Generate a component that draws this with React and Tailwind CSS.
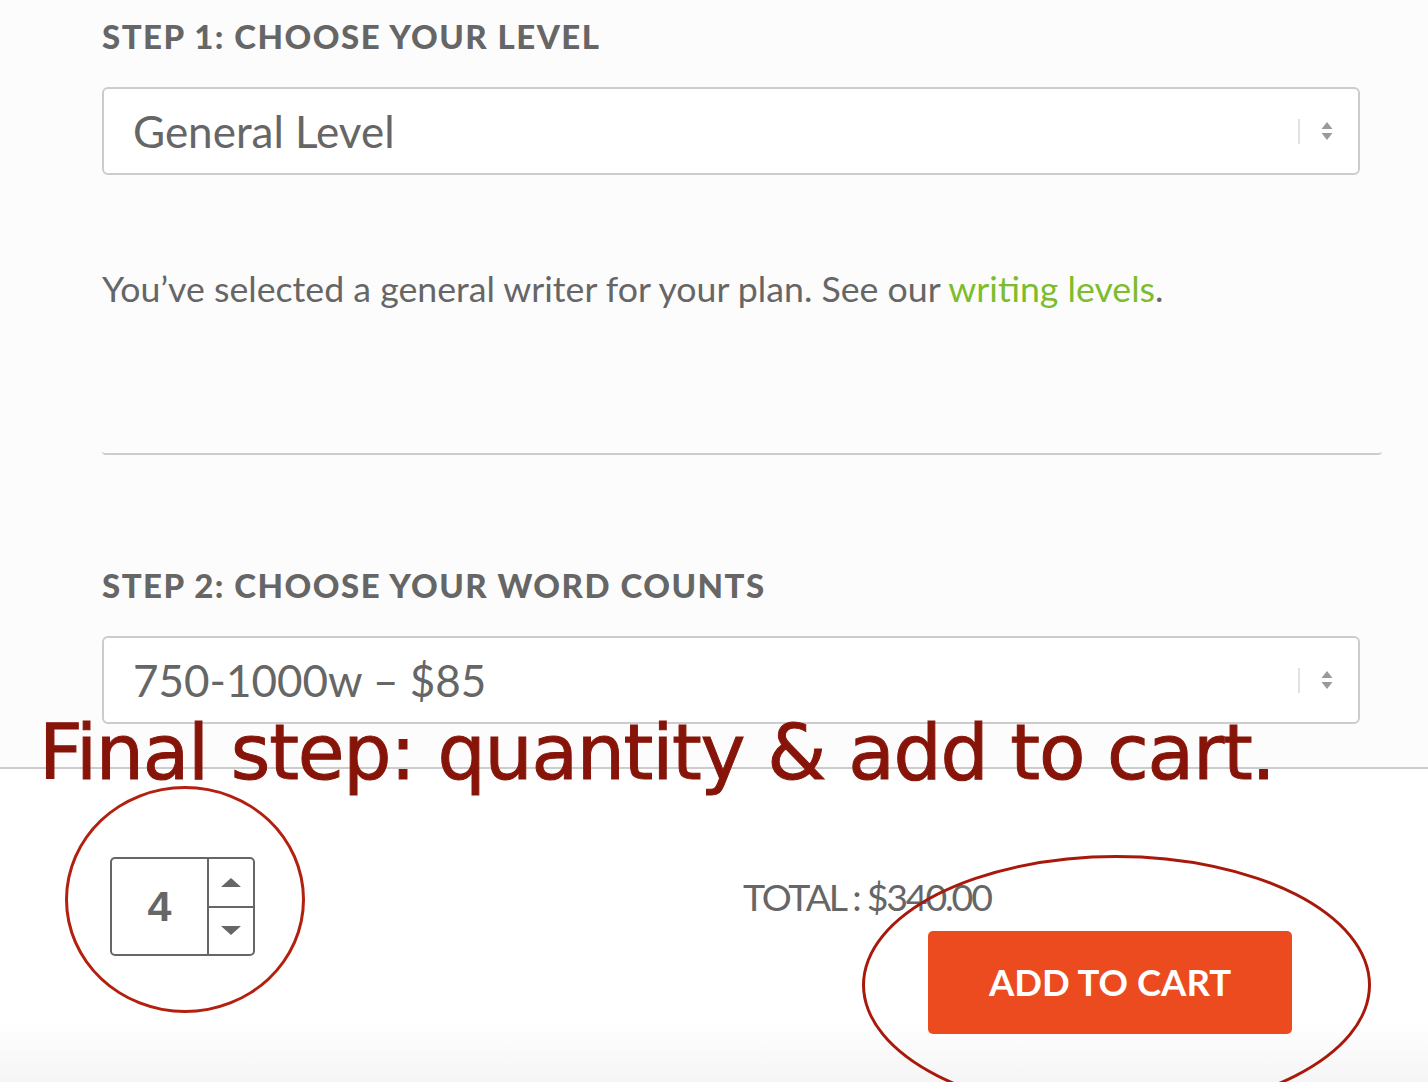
import React from 'react';

const Arrows = () => (
  <svg width="12" height="18" viewBox="0 0 12 18" className="ml-[21px]">
    <path d="M6 0 L11.5 7 H0.5 Z" fill="#9a9a9a" />
    <path d="M6 18 L11.5 11 H0.5 Z" fill="#9a9a9a" />
  </svg>
);

const Select = ({ value }) => {
  return (
    <div className="flex h-[88px] w-[1258px] items-center rounded-[6px] border-2 border-[#cccccc] bg-white pl-[29px] pr-[25px]">
      <span className="flex-1 text-[44px] leading-none text-[#666666]">{value}</span>
      <span className="h-[25px] w-[2px] bg-[#e2e2e2]" />
      <Arrows />
    </div>
  );
};

const App = () => {
  return (
    <div className="relative flex h-screen flex-col overflow-hidden bg-[#fcfcfc] font-['Lato',sans-serif]">
      {/* plan options */}
      <div className="pl-[102px] pt-[16px]">
        <h3 className="text-[33px] font-black uppercase leading-[40px] tracking-[1.5px] text-[#666666]">
          Step 1: Choose your level
        </h3>
        <div className="mt-[31px]">
          <Select value="General Level" />
        </div>
        <div className="mt-[93px] w-[1280px] rounded-b-[4px] border-b-2 border-[#cccccc] pb-[143px]">
          <p className="text-[35.7px] leading-[42px] text-[#666666]">
            You’ve selected a general writer for your plan. See our{' '}
            <a className="text-[#7cbd2e]">writing levels</a>.
          </p>
        </div>
        <h3 className="mt-[110px] text-[33px] font-black uppercase leading-[40px] tracking-[1.5px] text-[#666666]">
          Step 2: Choose your word counts
        </h3>
        <div className="mt-[31px]">
          <Select value="750-1000w – $85" />
        </div>
      </div>

      {/* quantity + cart bar */}
      <div className="mt-[43px] flex flex-1 border-t-2 border-[#cccccc] bg-linear-to-b from-white from-80% to-[#f5f5f5] pl-[110px] pr-[136px]">
        <div className="mt-[88px] flex h-[99px] w-[145px] self-start rounded-[5px] border-2 border-[#666666] bg-white">
          <div className="flex flex-1 items-center justify-center font-['Liberation_Sans',sans-serif] text-[43px] font-bold text-[#666666]">
            4
          </div>
          <div className="flex w-[46px] flex-col border-l-2 border-[#666666]">
            <div className="flex flex-1 items-center justify-center border-b-2 border-[#666666]">
              <svg width="20" height="9" viewBox="0 0 20 9">
                <path d="M10 0 L20 9 H0 Z" fill="#666666" />
              </svg>
            </div>
            <div className="flex flex-1 items-center justify-center">
              <svg width="20" height="9" viewBox="0 0 20 9">
                <path d="M10 9 L20 0 H0 Z" fill="#666666" />
              </svg>
            </div>
          </div>
        </div>
        <div className="ml-auto mt-[105px] flex w-[549px] flex-col self-start">
          <div className="text-[37.5px] leading-[46px] tracking-[-2.2px] text-[#666666]">TOTAL : $340.00</div>
          <button className="mt-[11px] h-[103px] w-[364px] self-end rounded-[5px] bg-[#ec4a1f] text-[36.5px] font-bold text-white">
            ADD TO CART
          </button>
        </div>
      </div>

      {/* annotations */}
      <div className="absolute left-[39px] top-[715px] whitespace-nowrap font-['DejaVu_Sans',sans-serif] text-[76px] leading-[76px] tracking-[-1.25px] text-[#861409] [-webkit-text-stroke:1px_#861409]">
        Final step: quantity &amp; add to cart.
      </div>
      <div className="absolute left-[65px] top-[786px] h-[227px] w-[240px] rounded-[50%] border-[3px] border-[#b3200f]" />
      <div className="absolute left-[862px] top-[855px] h-[260px] w-[509px] rounded-[50%] border-[3px] border-[#a8190c]" />
    </div>
  );
};

export default App;
